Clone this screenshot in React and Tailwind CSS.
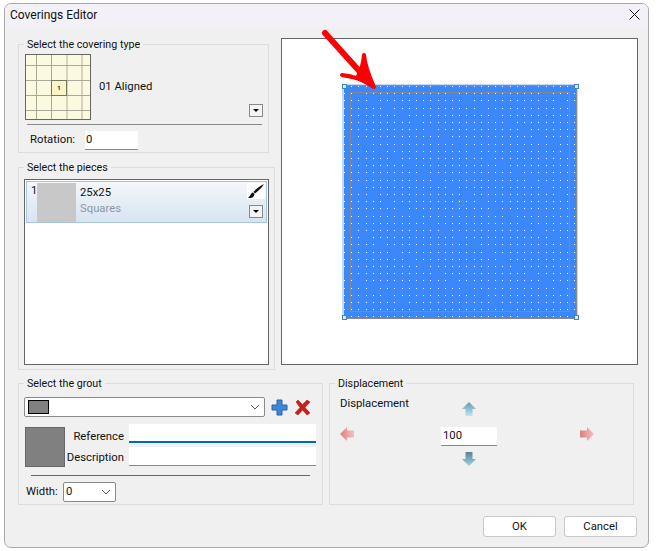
const font = { fontFamily: 'Roboto, sans-serif' };

function GroupBox({ title, className, children }) {
  return (
    <fieldset className={`border border-[#dcdcdc] min-w-0 ${className}`}>
      <legend className="ml-[5px] px-[3px] text-[10.7px] leading-[14px] text-[#111] translate-y-px">{title}</legend>
      {children}
    </fieldset>
  );
}

function DropButton() {
  return (
    <div className="w-[14px] h-[13px] border border-[#888] bg-[#f4f4f4] flex items-center justify-center">
      <div className="w-0 h-0 border-l-[3px] border-r-[3px] border-t-[3px] border-l-transparent border-r-transparent border-t-black" />
    </div>
  );
}

function Chevron() {
  return (
    <svg width="10" height="6" viewBox="0 0 10 6" className="shrink-0">
      <path d="M1 1l4 4 4-4" fill="none" stroke="#555" strokeWidth="1" />
    </svg>
  );
}

function PatternThumb() {
  const v = [11, 26, 41, 56];
  const h = [11, 26, 41, 56];
  return (
    <svg width="66" height="66" viewBox="0 0 66 66" className="shrink-0">
      <rect x="0.5" y="0.5" width="65" height="65" fill="#fbf9e0" stroke="#666" />
      {v.map((x, i) => (
        <rect key={x} x={x} y="1" width={i > 1 ? 2 : 1} height="64" fill={i > 1 ? '#d5d2bd' : '#aaa99a'} />
      ))}
      {h.map((y) => (
        <rect key={y} x="1" y={y} width="64" height="1" fill="#aaa99a" />
      ))}
      <rect x="26.5" y="26.5" width="15" height="15" fill="#faf6c8" stroke="#77765f" />
      <text x="34" y="36" fontSize="6" textAnchor="middle" fill="#222" fontWeight="bold">1</text>
    </svg>
  );
}

function Brush() {
  return (
    <svg width="18" height="16" viewBox="0 0 18 16" className="bg-white block">
      <path d="M17 1C13 3 9 6 6.500 9l1.500 1.500C11 8 15 5 17 1z" fill="#111" />
      <path d="M6 9.500C3.500 10 3.500 13.500 1 15c3 .5 6-.5 6.500-4z" fill="#111" />
    </svg>
  );
}

function Preview() {
  const dots = Array.from({ length: 33 }, (_, i) => i);
  return (
    <div className="w-[357px] h-[327px] bg-white border border-[#666] shrink-0">
      <svg width="355" height="325" viewBox="282 39 355 325" className="overflow-visible block">
        <rect x="342" y="84" width="236" height="235" fill="#c7d9ee" />
        <rect x="344" y="85" width="232" height="233" fill="#3a88fb" />
        <path d="M344 85.500H576.500V318.500H344" fill="none" stroke="#8a8a8a" />
        <rect x="350.500" y="92.500" width="219" height="219" fill="none" stroke="#8a8a8a" />
        {/* the grid drops a few dots in the original, same here */}
        {dots.map((i) =>
          dots.map((j) =>
            (i * 5 + j * 3) % 13 === 0 ? null : (
              <rect key={`${i}-${j}`} x={344 + Math.round(i * 7.2)} y={86 + Math.round(j * 7.2)} width="1" height="1" fill="#f4f8ff" />
            )
          )
        )}
        <rect x="458.500" y="200.500" width="5" height="5" fill="none" stroke="#5a8fbf" />
        {[[342, 84], [574, 84], [342, 315], [574, 315]].map(([x, y]) => (
          <rect key={`${x}${y}`} x={x + 0.5} y={y + 0.5} width="4" height="4" fill="#dbe8f6" stroke="#3f86b8" />
        ))}
        <path d="M325 33L370 83" stroke="#fd0006" strokeWidth="6" strokeLinecap="round" fill="none" />
        <path d="M342 75C353 76 365 81 374 87C369 76 365 66 364 55C363 66 361 72 357 78Z" fill="#fd0006" stroke="#fd0006" strokeWidth="4" strokeLinejoin="round" />
      </svg>
    </div>
  );
}

function Arrow({ dir, tone }) {
  const rot = { up: 'rotate-0', down: 'rotate-180', left: '-rotate-90', right: 'rotate-90' }[dir];
  const id = `arrow-${dir}`;
  return (
    <svg width="14" height="14" viewBox="0 0 14 14" className={rot}>
      <defs>
        <linearGradient id={id} x1="0" y1="0" x2="0" y2="1">
          <stop offset="0" stopColor={tone[0]} />
          <stop offset="1" stopColor={tone[1]} />
        </linearGradient>
      </defs>
      <path d="M7 0L14 7H10.500V14H3.500V7H0Z" fill={`url(#${id})`} />
    </svg>
  );
}

export default function App() {
  return (
    <div className="w-[657px] h-[551px] bg-white pl-[4px] pt-[3px] overflow-hidden text-[11.3px] text-[#111]" style={font}>
      <div className="w-[645px] h-[545px] bg-[#f0f0f0] border border-[#a8a8a8] rounded-[7px] overflow-hidden">
        <div className="h-[23px] bg-[#f3f1f7] flex items-center justify-between pl-[5px] pr-[8px] pb-[2px]">
          <span className="text-[12px]">Coverings Editor</span>
          <svg width="11" height="11" viewBox="0 0 11 11">
            <path d="M.5.500l10 10M10.500.500l-10 10" stroke="#111" strokeWidth="1" />
          </svg>
        </div>

        <div className="flex pl-[13px] pt-[11px]">
          <div className="w-[263px] flex flex-col -mt-[1px]">
            <GroupBox title="Select the covering type" className="w-[251px] h-[116px]">
              <div className="flex items-start pl-[6px] pr-[5px] pt-[3px]">
                <PatternThumb />
                <span className="ml-[8px] mt-[25px] leading-[16px]">01 Aligned</span>
                <div className="ml-auto mt-[50px]"><DropButton /></div>
              </div>
              <div className="h-px bg-[#888] mt-[4px] ml-[8px] mr-[6px]" />
              <div className="flex items-center mt-[6px] ml-[11px]">
                <span className="w-[55px]">Rotation:</span>
                <div className="w-[53px] h-[19px] bg-white border-b border-[#888] pl-[1px] leading-[18px]">0</div>
              </div>
            </GroupBox>

            <GroupBox title="Select the pieces" className="w-[257px] h-[210px] mt-[7px]">
              <div className="w-[245px] h-[186px] bg-white border border-[#666] p-px mt-[5px] ml-[5px]">
                <div className="h-[42px] flex border border-[#a9c6dc] bg-gradient-to-b from-[#f4f7fa] to-[#d7e4ef] pl-[4px] pt-[1px]">
                  <span className="w-[6px] leading-[16px]">1</span>
                  <div className="w-[39px] h-[39px] bg-[#c8c8c8]" />
                  <div className="ml-[4px] leading-[16px] mt-[2px]">
                    <div>25x25</div>
                    <div className="text-[#8b97a3]">Squares</div>
                  </div>
                  <div className="ml-auto mr-[1px] flex flex-col items-center">
                    <Brush />
                    <div className="mt-[6px]"><DropButton /></div>
                  </div>
                </div>
              </div>
            </GroupBox>
          </div>
          <Preview />
        </div>

        <div className="flex pl-[13px] mt-[6px]">
          <GroupBox title="Select the grout" className="w-[305px] h-[129px]">
            <div className="flex items-center mt-[7px] ml-[5px]">
              <div className="w-[241px] h-[20px] bg-white border border-[#8a8a8a] rounded-[2px] flex items-center justify-between pl-[3px] pr-[4px]">
                <div className="w-[21px] h-[14px] bg-[#808080] border border-black" />
                <Chevron />
              </div>
              <svg width="17" height="17" viewBox="0 0 17 17" className="ml-[6px]">
                <path d="M6 1h5v5h5v5h-5v5H6v-5H1V6h5z" fill="#3f86d8" stroke="#2a60ad" />
              </svg>
              <svg width="17" height="17" viewBox="0 0 17 17" className="ml-[6px]">
                <path d="M2 3l2-2 4.500 4.500L13 1l3 2-5 5.500 5 5.500-3 2-4.500-5L4 16l-3-2 5-5.500z" fill="#c8201c" stroke="#a31412" strokeWidth="0.5" />
              </svg>
            </div>
            <div className="flex mt-[7px] ml-[6px]">
              <div className="w-[40px] h-[40px] bg-[#808080] border border-[#666] mt-[3px]" />
              <div className="flex flex-col items-end w-[59px] leading-[21px] mt-[2px]">
                <div>Reference</div>
                <div>Description</div>
              </div>
              <div className="ml-[5px] w-[187px]">
                <div className="h-[19px] bg-white border-b-2 border-[#0067c0]" />
                <div className="h-[19px] bg-white border-b border-[#888] mt-[4px]" />
              </div>
            </div>
            <div className="h-px bg-[#666] mt-[7px] ml-[12px] mr-[12px]" />
            <div className="flex items-center mt-[6px] ml-[7px]">
              <span className="w-[37px]">Width:</span>
              <div className="w-[53px] h-[20px] bg-white border border-[#8a8a8a] rounded-[2px] flex items-center justify-between pl-[2px] pr-[4px]">
                <span>0</span>
                <Chevron />
              </div>
            </div>
          </GroupBox>

          <GroupBox title="Displacement" className="w-[305px] h-[129px] ml-[6px]">
            <div className="mt-[6px] ml-[10px] leading-[16px]">Displacement</div>
            <div className="grid grid-cols-[101px_56px_97px] ml-[10px] -mt-[10px]">
              <div />
              <div className="flex justify-center pr-[1px]"><Arrow dir="up" tone={['#5f9cb0', '#c0e4ee']} /></div>
              <div />
              <div className="flex items-center"><Arrow dir="left" tone={['#d88080', '#f5c0c0']} /></div>
              <div className="h-[19px] bg-white border-b border-[#888] mt-[11px] mb-[6px] pl-[2px] leading-[18px]">100</div>
              <div className="flex items-center justify-end"><Arrow dir="right" tone={['#f5c0c0', '#d88080']} /></div>
              <div />
              <div className="flex justify-center pr-[1px]"><Arrow dir="down" tone={['#a0d0e0', '#5a8496']} /></div>
              <div />
            </div>
          </GroupBox>
        </div>

        <div className="flex justify-end gap-[8px] pr-[11px] mt-[11px]">
          <button className="w-[73px] h-[21px] bg-white border border-[#c8c8c8] rounded-[3px] leading-[19px]">OK</button>
          <button className="w-[73px] h-[21px] bg-white border border-[#c8c8c8] rounded-[3px] leading-[19px]">Cancel</button>
        </div>
      </div>
    </div>
  );
}
